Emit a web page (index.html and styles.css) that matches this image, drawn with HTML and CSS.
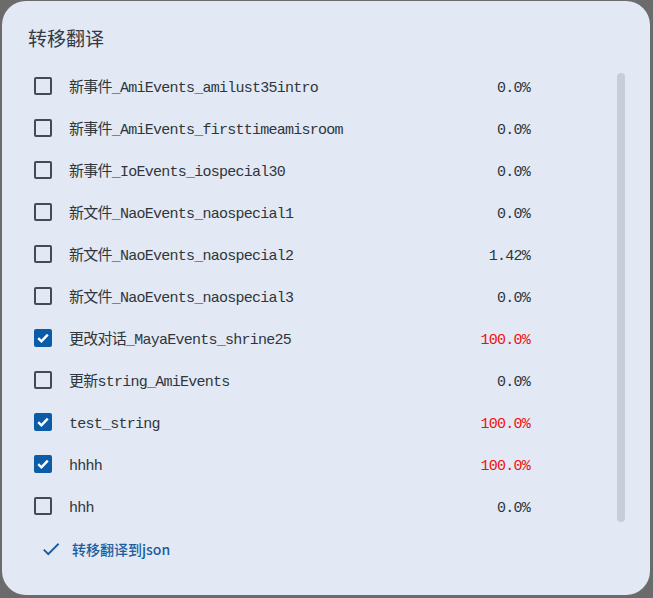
FILE: index.html
```html
<!DOCTYPE html>
<html lang="zh">
<head>
<meta charset="utf-8">
<title>转移翻译</title>
<link rel="stylesheet" href="styles.css">
</head>
<body>
<div class="dialog">
  <div class="title">转移翻译</div>
  <div class="body">
    <div class="list">
      <div class="row"><span class="box"></span><span class="name">新事件_AmiEvents_amilust35intro</span><span class="pct">0.0%</span></div>
      <div class="row"><span class="box"></span><span class="name">新事件_AmiEvents_firsttimeamisroom</span><span class="pct">0.0%</span></div>
      <div class="row"><span class="box"></span><span class="name">新事件_IoEvents_iospecial30</span><span class="pct">0.0%</span></div>
      <div class="row"><span class="box"></span><span class="name">新文件_NaoEvents_naospecial1</span><span class="pct">0.0%</span></div>
      <div class="row"><span class="box"></span><span class="name">新文件_NaoEvents_naospecial2</span><span class="pct">1.42%</span></div>
      <div class="row"><span class="box"></span><span class="name">新文件_NaoEvents_naospecial3</span><span class="pct">0.0%</span></div>
      <div class="row"><span class="box checked"><svg viewBox="0 0 18 18"><path d="M4.2 9.2l3.2 3.1 6.4-6.6"/></svg></span><span class="name">更改对话_MayaEvents_shrine25</span><span class="pct full">100.0%</span></div>
      <div class="row"><span class="box"></span><span class="name">更新string_AmiEvents</span><span class="pct">0.0%</span></div>
      <div class="row"><span class="box checked"><svg viewBox="0 0 18 18"><path d="M4.2 9.2l3.2 3.1 6.4-6.6"/></svg></span><span class="name">test_string</span><span class="pct full">100.0%</span></div>
      <div class="row"><span class="box checked"><svg viewBox="0 0 18 18"><path d="M4.2 9.2l3.2 3.1 6.4-6.6"/></svg></span><span class="name">hhhh</span><span class="pct full">100.0%</span></div>
      <div class="row"><span class="box"></span><span class="name">hhh</span><span class="pct">0.0%</span></div>
    </div>
    <div class="scroll"><div class="thumb"></div></div>
  </div>
  <div class="footer">
    <button class="action"><svg class="ok" viewBox="0 0 24 24"><path d="M9 16.17L4.83 12l-1.42 1.41L9 19 21 7l-1.41-1.41z"/></svg><span>转移翻译到json</span></button>
  </div>
</div>
</body>
</html>
```

FILE: styles.css
```css
html, body {
  margin: 0;
  padding: 0;
  background: #6b6b6b;
  width: 653px;
  height: 598px;
  overflow: hidden;
}
.dialog {
  margin: 1px 3px 3px 2px;
  height: 594px;
  box-sizing: border-box;
  background: #e2e9f4;
  border-radius: 24px;
  display: flex;
  flex-direction: column;
}
.title {
  padding: 23px 0 0 26px;
  font-family: "Noto Sans CJK SC", sans-serif;
  font-size: 19px;
  line-height: 28px;
  height: 30px;
  color: #333a44;
}
.body {
  margin-top: 11px;
  height: 462px;
  display: flex;
}
.list {
  width: 528px;
  box-sizing: border-box;
  padding-left: 32px;
}
.row {
  height: 42px;
  display: flex;
  align-items: center;
  font-family: "Liberation Mono", "Noto Sans CJK SC", monospace;
  font-size: 15px;
  line-height: 18px;
  letter-spacing: -0.75px;
  color: #30353c;
}
.box {
  width: 18px;
  height: 18px;
  box-sizing: border-box;
  border: 2px solid #454a52;
  border-radius: 2px;
  margin-right: 17px;
  flex: none;
  display: flex;
  align-items: center;
  justify-content: center;
}
.box.checked {
  background: #0b5ba6;
  border-color: #0b5ba6;
}
.box svg {
  width: 18px;
  height: 18px;
  flex: none;
  fill: none;
  stroke: #fff;
  stroke-width: 2.4;
}
.name, .pct {
  padding-top: 5px;
}
.name {
  flex: 1;
  white-space: nowrap;
}
.pct {
  text-align: right;
}
.pct.full {
  color: #f01010;
}
.scroll {
  margin-left: 87px;
  width: 8px;
}
.thumb {
  margin-top: 8px;
  height: 449px;
  width: 8px;
  border-radius: 4px;
  background: #c6ced9;
}
.footer {
  padding: 4px 0 0 28px;
}
.action {
  display: flex;
  align-items: center;
  gap: 12px;
  height: 36px;
  padding: 0 12px;
  border: none;
  background: transparent;
  font-family: "Noto Sans CJK SC", sans-serif;
  font-size: 14px;
  font-weight: 500;
  color: #1a5d9e;
}
.ok {
  width: 22px;
  height: 22px;
  fill: #1a5d9e;
  margin-left: -2px;
  margin-right: -2px;
}
```
